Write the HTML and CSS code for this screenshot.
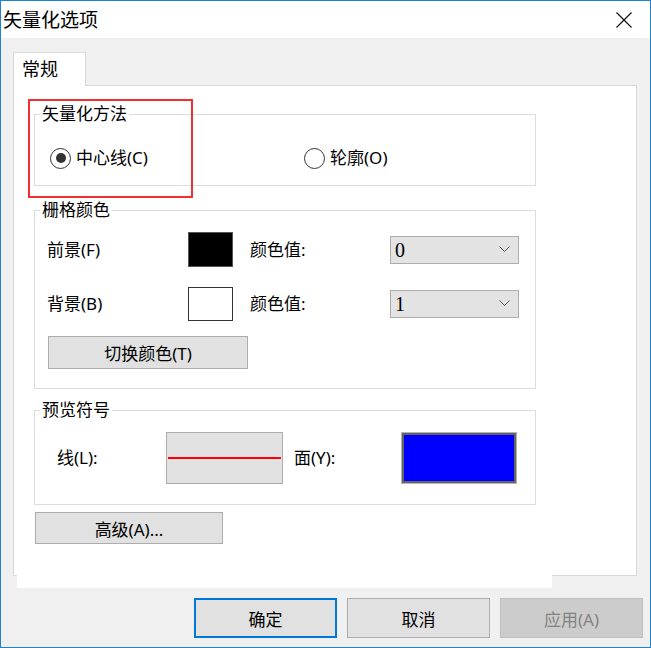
FILE: index.html
```html
<!DOCTYPE html>
<html lang="zh-CN">
<head>
    <meta charset="UTF-8">
    <title>矢量化选项</title>
    <link rel="stylesheet" href="styles.css">
</head>
<body>
    <div class="window">
        <div class="titlebar">
            <span class="title">矢量化选项</span>
            <svg class="close" width="16" height="16" viewBox="0 0 16 16">
                <path d="M0.5 0.5 L15.5 15.5 M15.5 0.5 L0.5 15.5" stroke="#111" stroke-width="1.2" fill="none"/>
            </svg>
        </div>
        <div class="tabs">
            <div class="tab">常规</div>
        </div>
        <div class="panel">
            <fieldset class="group method">
                <legend>矢量化方法</legend>
                <div class="radio-row">
                    <label class="radio first"><span class="circle checked"></span>中心线(C)</label>
                    <label class="radio"><span class="circle"></span>轮廓(O)</label>
                </div>
            </fieldset>
            <fieldset class="group raster">
                <legend>栅格颜色</legend>
                <div class="color-row">
                    <span class="lbl">前景(F)</span>
                    <span class="swatch black"></span>
                    <span class="lbl2">颜色值:</span>
                    <div class="combo">
                        <span class="combo-val">0</span>
                        <svg width="11" height="7" viewBox="0 0 11 7"><polyline points="0.5,0.5 5.5,5.5 10.5,0.5" stroke="#555" fill="none"/></svg>
                    </div>
                </div>
                <div class="color-row second">
                    <span class="lbl">背景(B)</span>
                    <span class="swatch white"></span>
                    <span class="lbl2">颜色值:</span>
                    <div class="combo">
                        <span class="combo-val">1</span>
                        <svg width="11" height="7" viewBox="0 0 11 7"><polyline points="0.5,0.5 5.5,5.5 10.5,0.5" stroke="#555" fill="none"/></svg>
                    </div>
                </div>
                <button class="btn swap">切换颜色(T)</button>
            </fieldset>
            <fieldset class="group preview">
                <legend>预览符号</legend>
                <div class="preview-row">
                    <span class="plbl">线(L):</span>
                    <div class="line-box"><div class="red-line"></div></div>
                    <span class="plbl2">面(Y):</span>
                    <div class="fill-box"><div class="fill-inner"></div></div>
                </div>
            </fieldset>
            <button class="btn adv">高级(A)...</button>
            <div class="highlight"></div>
        </div>
        <div class="footer">
            <button class="btn footer-btn default">确定</button>
            <button class="btn footer-btn">取消</button>
            <button class="btn footer-btn disabled">应用(A)</button>
        </div>
    </div>
</body>
</html>
```

FILE: styles.css
```css
body {
    margin: 0;
    padding: 0;
    font-family: "Noto Sans", "Noto Sans CJK SC", sans-serif;
    font-size: 17px;
    color: #000;
}
.window {
    width: 651px;
    height: 648px;
    box-sizing: border-box;
    border: 1px solid #1883d7;
    background-color: #f0f0f0;
}
.titlebar {
    height: 37px;
    background-color: #fff;
    display: flex;
    align-items: center;
    justify-content: space-between;
}
.title {
    margin-left: 2px;
    font-size: 19px;
    line-height: 22px;
}
.close {
    margin-right: 18px;
}
.tabs {
    margin-top: 14px;
    padding-left: 12px;
    display: flex;
}
.tab {
    position: relative;
    z-index: 1;
    width: 73px;
    height: 34px;
    box-sizing: border-box;
    border: 1px solid #d9d9d9;
    border-bottom: none;
    background-color: #fff;
    padding-left: 8px;
    font-size: 18px;
    line-height: 32px;
}
.panel {
    position: relative;
    margin-top: -1px;
    margin-left: 12px;
    width: 624px;
    height: 491px;
    box-sizing: border-box;
    border: 1px solid #d9d9d9;
    background-color: #fff;
    padding: 18px 0 0 20px;
}
.panel::after {
    content: "";
    position: absolute;
    left: 3px;
    top: 489px;
    width: 535px;
    height: 13px;
    background-color: #fff;
}
.highlight {
    position: absolute;
    left: 14px;
    top: 13px;
    width: 165px;
    height: 99px;
    box-sizing: border-box;
    border: 2px solid #f03030;
}
.group {
    width: 502px;
    box-sizing: border-box;
    margin: 0;
    border: 1px solid #dcdcdc;
    min-width: 0;
}
.group legend {
    padding: 0 2px;
    line-height: 20px;
    height: 20px;
}
.method {
    padding: 23px 0 16px 15px;
}
.method legend {
    margin-left: -10px;
}
.radio-row {
    display: flex;
    height: 22px;
    align-items: center;
}
.radio {
    display: flex;
    align-items: center;
    line-height: 22px;
}
.radio.first {
    width: 254px;
}
.circle {
    width: 21px;
    height: 21px;
    box-sizing: border-box;
    border: 1.5px solid #333;
    border-radius: 50%;
    margin-right: 5px;
    display: flex;
    align-items: center;
    justify-content: center;
}
.circle.checked::after {
    content: "";
    width: 10px;
    height: 10px;
    border-radius: 50%;
    background-color: #333;
}
.raster {
    margin-top: 14px;
    padding: 12px 0 19px 12px;
}
.raster legend {
    margin-left: -7px;
}
.color-row {
    display: flex;
    align-items: center;
    height: 35px;
}
.color-row.second {
    margin-top: 19px;
}
.lbl {
    width: 141px;
    line-height: 22px;
}
.lbl2 {
    width: 140px;
    margin-left: 17px;
    line-height: 22px;
}
.swatch {
    width: 45px;
    height: 35px;
    box-sizing: border-box;
}
.swatch.black {
    background-color: #000;
    border: 1px solid #555;
}
.swatch.white {
    background-color: #fff;
    border: 1px solid #333;
    height: 34px;
}
.combo {
    width: 129px;
    height: 28px;
    box-sizing: border-box;
    background-color: #e3e3e3;
    border: 1px solid #adadad;
    display: flex;
    align-items: center;
    justify-content: space-between;
    padding: 0 8px 0 4px;
}
.combo-val {
    font-family: "Liberation Serif", "DejaVu Serif", serif;
    font-size: 20px;
    line-height: 22px;
}
.btn {
    font-family: "Noto Sans", "Noto Sans CJK SC", sans-serif;
    font-size: 17px;
    color: #000;
    background-color: #e1e1e1;
    border: 1px solid #adadad;
    box-sizing: border-box;
    padding: 0;
    display: block;
}
.swap {
    margin-top: 15px;
    margin-left: 1px;
    width: 200px;
    height: 33px;
}
.preview {
    margin-top: 11px;
    padding: 12px 0 20px 22px;
}
.preview legend {
    margin-left: -17px;
}
.preview-row {
    display: flex;
    align-items: center;
    height: 52px;
}
.plbl {
    width: 109px;
    line-height: 22px;
}
.plbl2 {
    width: 107px;
    margin-left: 11px;
    line-height: 22px;
}
.line-box {
    width: 117px;
    height: 52px;
    box-sizing: border-box;
    background-color: #e1e1e1;
    border: 1px solid #adadad;
    display: flex;
    align-items: center;
    padding: 0 1px;
}
.red-line {
    width: 100%;
    height: 2px;
    background-color: #f00;
}
.fill-box {
    width: 116px;
    height: 52px;
    box-sizing: border-box;
    border: 1px solid #b4b4b4;
}
.fill-inner {
    height: 100%;
    box-sizing: border-box;
    border: 2px solid #646464;
    background-color: #0000ff;
}
.adv {
    margin-top: 7px;
    margin-left: 1px;
    width: 188px;
    height: 32px;
}
.footer {
    margin-top: 22px;
    padding-right: 7px;
    display: flex;
    justify-content: flex-end;
    gap: 10px;
}
.footer-btn {
    width: 143px;
    height: 40px;
}
.footer-btn.default {
    border: 2px solid #0078d7;
}
.footer-btn.disabled {
    background-color: #cccccc;
    border-color: #bfbfbf;
    color: #838383;
}
```
